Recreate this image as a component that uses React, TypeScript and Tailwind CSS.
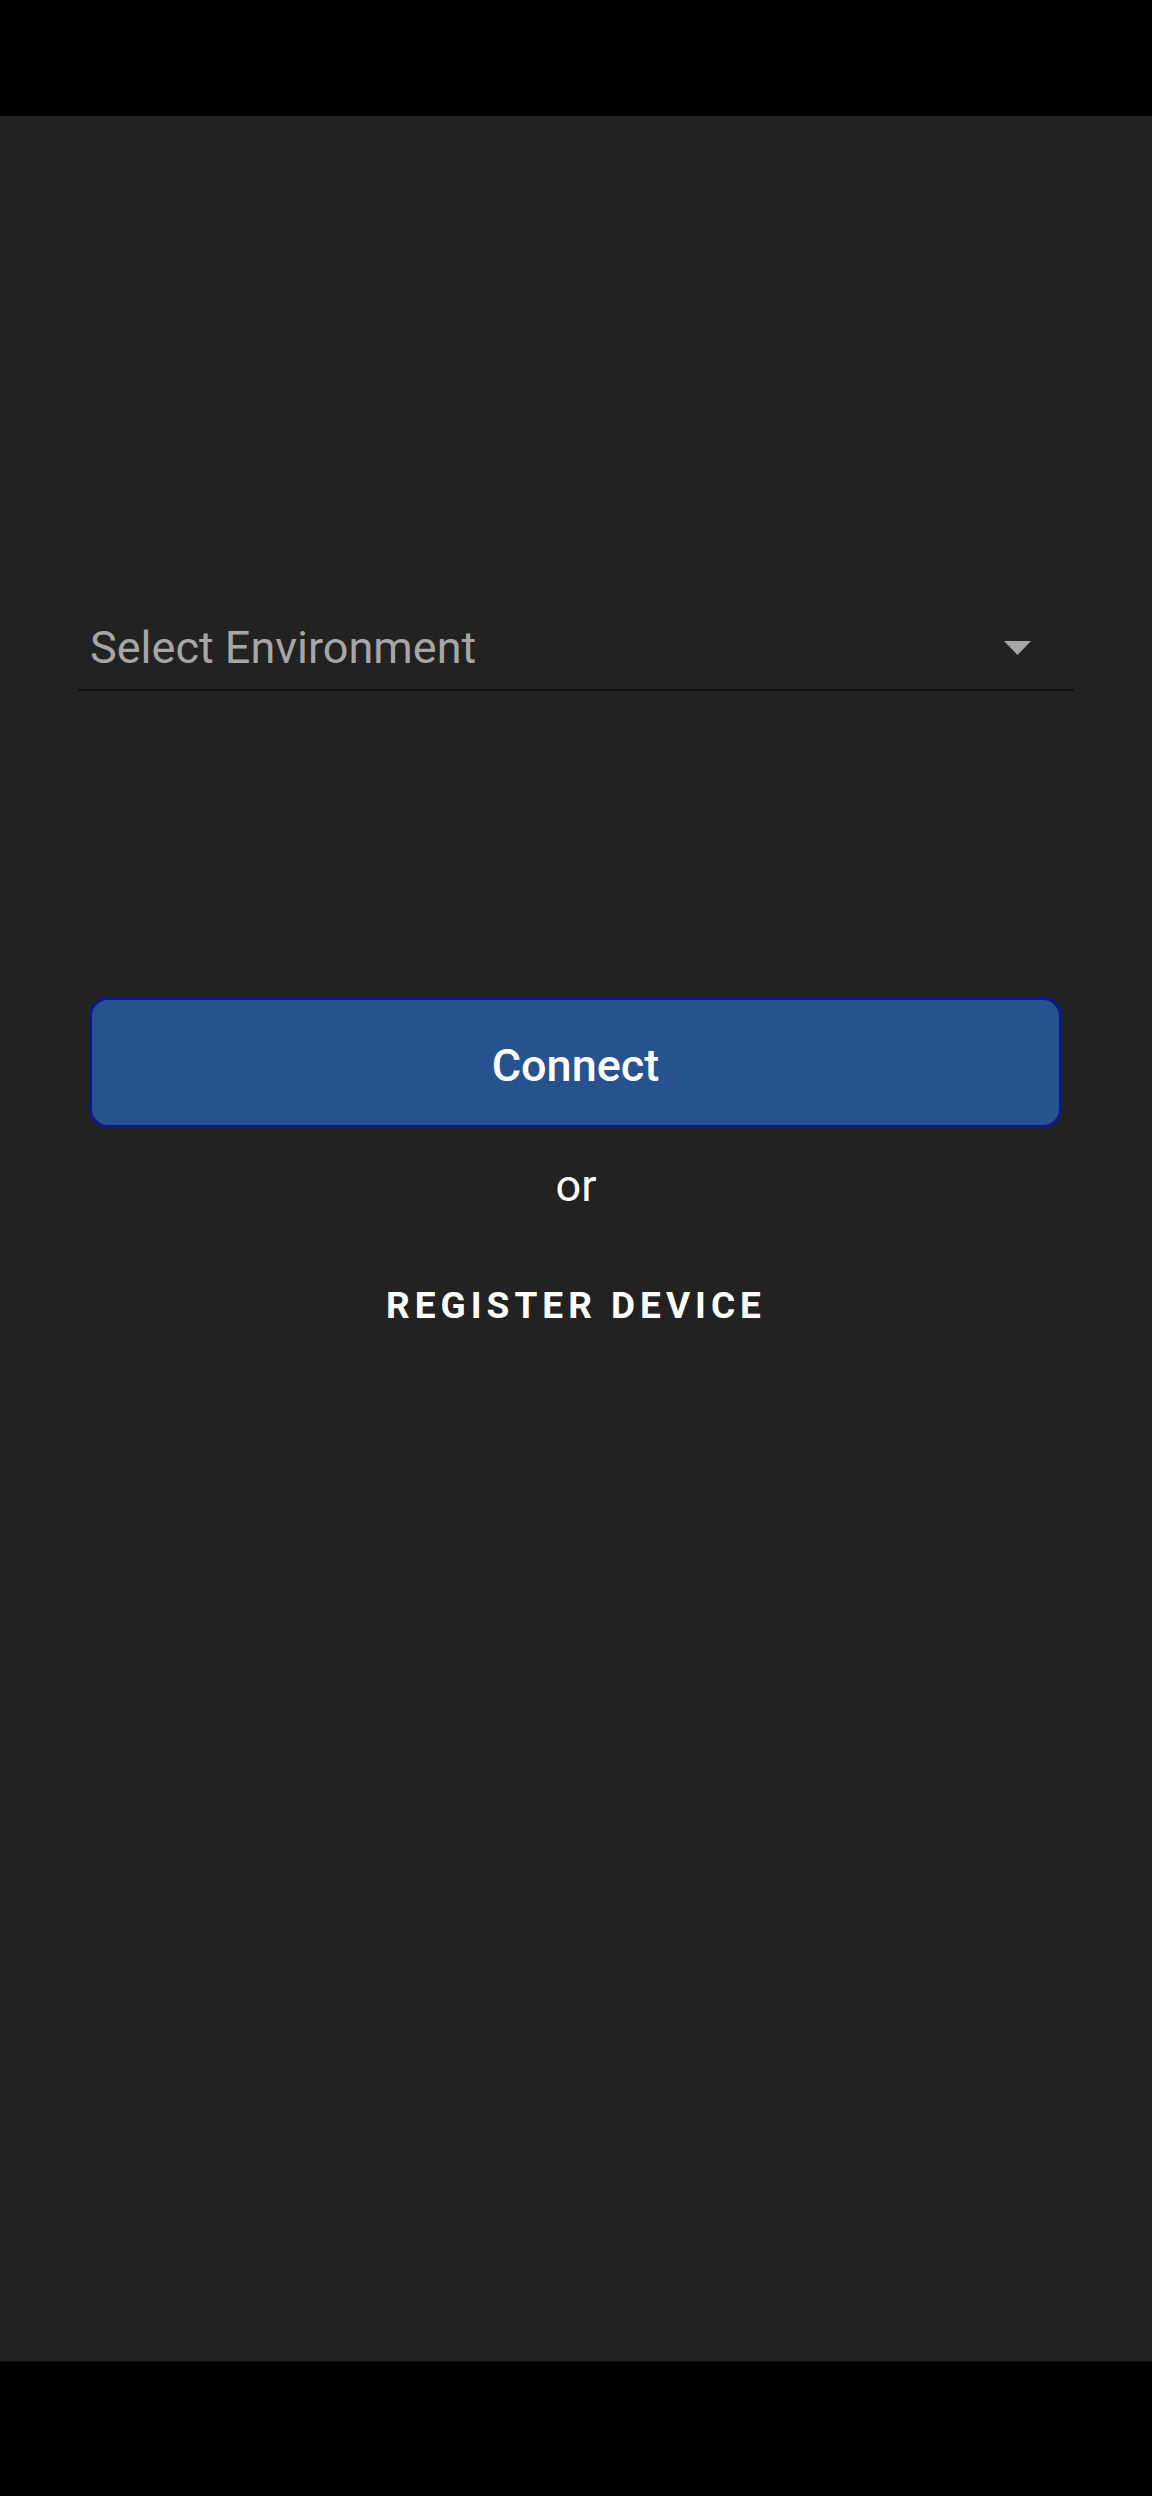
import React from 'react';

const App: React.FC = () => {
  return (
    <div className="w-[1152px] h-[2496px] overflow-hidden flex flex-col bg-black" style={{ fontFamily: 'Roboto, "Noto Sans", sans-serif' }}>
      <div className="h-[116px] shrink-0 bg-black" />
      <div className="flex-1 min-h-0 flex flex-col bg-[#222222] pt-[509px]">
        {/* environment picker */}
        <div className="ml-[78px] mr-[78px] flex items-center border-b-2 border-[#111111] pl-[12px] pr-[43px] pb-[19px]">
          <span className="flex-1 text-[45px] leading-[45px] text-[#a6a6a6]">Select Environment</span>
          <svg width="27" height="14" viewBox="0 0 27 14" className="shrink-0">
            <path d="M0 0 L27 0 L13.5 14 Z" fill="#a6a6a6" />
          </svg>
        </div>

        <button className="mt-[306px] ml-[89px] mr-[90px] h-[131px] pt-[5px] rounded-[19px] border-[3px] border-[#0c1a8c] bg-[#26538f] text-white text-[45px] leading-[45px] font-medium">
          Connect
        </button>

        <div className="mt-[35px] text-center text-white text-[45px] leading-[45px]">or</div>

        <div className="mt-[79px] text-center text-white text-[37px] leading-[37px] font-bold tracking-[5px]">
          REGISTER DEVICE
        </div>
      </div>
      <div className="h-[135px] shrink-0 bg-black border-t border-[#151515]" />
    </div>
  );
};

export default App;
